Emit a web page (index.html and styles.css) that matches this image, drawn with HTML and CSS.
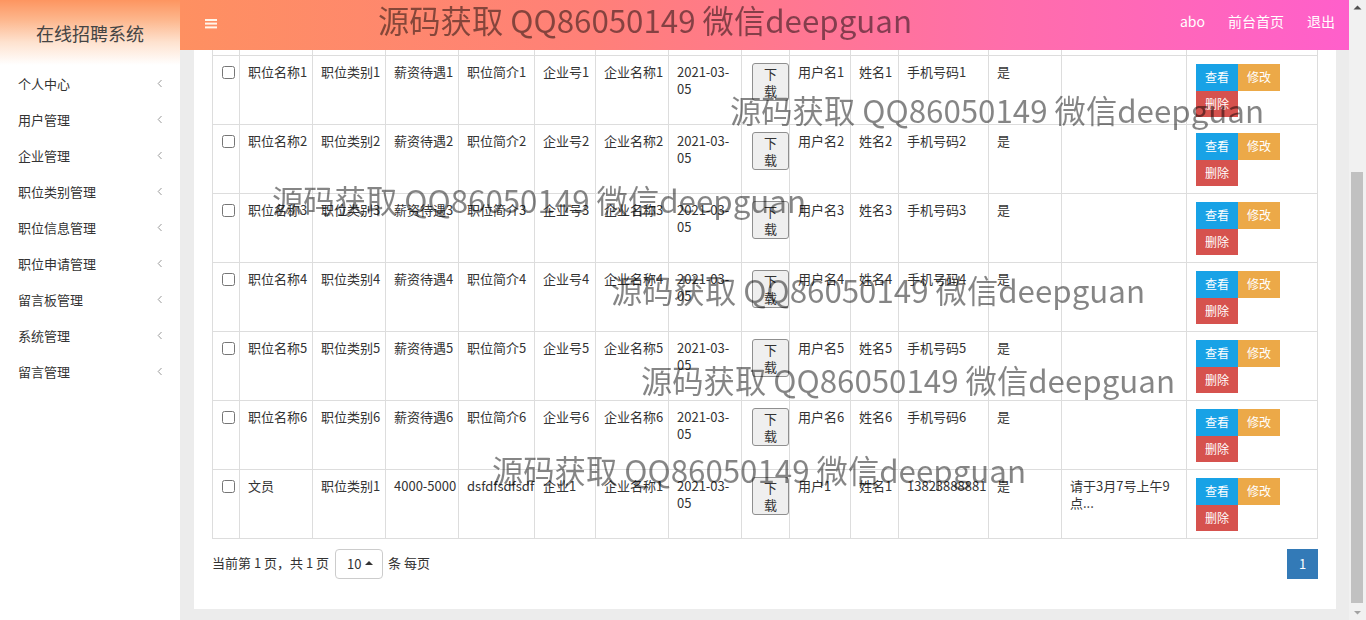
FILE: index.html
```html
<!DOCTYPE html>
<html lang="zh-CN">
<head>
<meta charset="utf-8">
<title>在线招聘系统</title>
<link rel="stylesheet" href="styles.css">
</head>
<body>
<div class="app">
<aside class="sidebar">
  <div class="logo">在线招聘系统</div>
  <ul class="menu">
    <li><span>个人中心</span><svg class="chev" width="6" height="9" viewBox="0 0 6 9"><polyline points="4.5,1 1.2,4.5 4.5,8" fill="none" stroke="#9a9a9a" stroke-width="1"/></svg></li>
    <li><span>用户管理</span><svg class="chev" width="6" height="9" viewBox="0 0 6 9"><polyline points="4.5,1 1.2,4.5 4.5,8" fill="none" stroke="#9a9a9a" stroke-width="1"/></svg></li>
    <li><span>企业管理</span><svg class="chev" width="6" height="9" viewBox="0 0 6 9"><polyline points="4.5,1 1.2,4.5 4.5,8" fill="none" stroke="#9a9a9a" stroke-width="1"/></svg></li>
    <li><span>职位类别管理</span><svg class="chev" width="6" height="9" viewBox="0 0 6 9"><polyline points="4.5,1 1.2,4.5 4.5,8" fill="none" stroke="#9a9a9a" stroke-width="1"/></svg></li>
    <li><span>职位信息管理</span><svg class="chev" width="6" height="9" viewBox="0 0 6 9"><polyline points="4.5,1 1.2,4.5 4.5,8" fill="none" stroke="#9a9a9a" stroke-width="1"/></svg></li>
    <li><span>职位申请管理</span><svg class="chev" width="6" height="9" viewBox="0 0 6 9"><polyline points="4.5,1 1.2,4.5 4.5,8" fill="none" stroke="#9a9a9a" stroke-width="1"/></svg></li>
    <li><span>留言板管理</span><svg class="chev" width="6" height="9" viewBox="0 0 6 9"><polyline points="4.5,1 1.2,4.5 4.5,8" fill="none" stroke="#9a9a9a" stroke-width="1"/></svg></li>
    <li><span>系统管理</span><svg class="chev" width="6" height="9" viewBox="0 0 6 9"><polyline points="4.5,1 1.2,4.5 4.5,8" fill="none" stroke="#9a9a9a" stroke-width="1"/></svg></li>
    <li><span>留言管理</span><svg class="chev" width="6" height="9" viewBox="0 0 6 9"><polyline points="4.5,1 1.2,4.5 4.5,8" fill="none" stroke="#9a9a9a" stroke-width="1"/></svg></li>
  </ul>
</aside>

<div class="workspace">
  <header class="topbar">
    <svg class="burger" width="12" height="10" viewBox="0 0 12 10"><rect x="0" y="0" width="12" height="2" fill="#fff6ea"/><rect x="0" y="3.6" width="12" height="2" fill="#fff6ea"/><rect x="0" y="7.4" width="12" height="2" fill="#fff6ea"/></svg>
    <nav class="topnav">
      <a>abo</a>
      <a>前台首页</a>
      <a>退出</a>
    </nav>
  </header>

  <main class="main">
    <section class="card">
      <div class="card-title">职位信息列表</div>
      <form class="search">
        <label>职位名称</label><input class="field" type="text">
        <label>职位类别</label><input class="field" type="text">
        <button type="button" class="sbtn blue">查询</button>
      </form>
      <div class="actions">
        <button type="button" class="sbtn green">新增</button>
        <button type="button" class="sbtn red">删除</button>
      </div>
      <table class="grid">
        <colgroup>
          <col style="width:27px"><col style="width:73px"><col style="width:73px"><col style="width:73px"><col style="width:76px"><col style="width:61px"><col style="width:73px"><col style="width:73px"><col style="width:48px"><col style="width:61px"><col style="width:48px"><col style="width:90px"><col style="width:73px"><col style="width:125px"><col style="width:131px">
        </colgroup>
        <thead>
          <tr><th><input type="checkbox" class="ck"></th><th>职位名称</th><th>职位类别</th><th>薪资待遇</th><th>职位简介</th><th>企业号</th><th>企业名称</th><th>发布日期</th><th>附件</th><th>用户名</th><th>姓名</th><th>手机号码</th><th>是否审核</th><th>审核回复</th><th>操作</th></tr>
        </thead>
        <tbody>
          <tr><td><input type="checkbox" class="ck"></td><td>职位名称1</td><td>职位类别1</td><td>薪资待遇1</td><td>职位简介1</td><td>企业号1</td><td>企业名称1</td><td class="w">2021-03-05</td><td><button type="button" class="dl">下载</button></td><td>用户名1</td><td>姓名1</td><td>手机号码1</td><td>是</td><td class="w"></td><td><div class="ops"><button type="button" class="op view">查看</button><button type="button" class="op edit">修改</button><button type="button" class="op del">删除</button></div></td></tr>
          <tr><td><input type="checkbox" class="ck"></td><td>职位名称2</td><td>职位类别2</td><td>薪资待遇2</td><td>职位简介2</td><td>企业号2</td><td>企业名称2</td><td class="w">2021-03-05</td><td><button type="button" class="dl">下载</button></td><td>用户名2</td><td>姓名2</td><td>手机号码2</td><td>是</td><td class="w"></td><td><div class="ops"><button type="button" class="op view">查看</button><button type="button" class="op edit">修改</button><button type="button" class="op del">删除</button></div></td></tr>
          <tr><td><input type="checkbox" class="ck"></td><td>职位名称3</td><td>职位类别3</td><td>薪资待遇3</td><td>职位简介3</td><td>企业号3</td><td>企业名称3</td><td class="w">2021-03-05</td><td><button type="button" class="dl">下载</button></td><td>用户名3</td><td>姓名3</td><td>手机号码3</td><td>是</td><td class="w"></td><td><div class="ops"><button type="button" class="op view">查看</button><button type="button" class="op edit">修改</button><button type="button" class="op del">删除</button></div></td></tr>
          <tr><td><input type="checkbox" class="ck"></td><td>职位名称4</td><td>职位类别4</td><td>薪资待遇4</td><td>职位简介4</td><td>企业号4</td><td>企业名称4</td><td class="w">2021-03-05</td><td><button type="button" class="dl">下载</button></td><td>用户名4</td><td>姓名4</td><td>手机号码4</td><td>是</td><td class="w"></td><td><div class="ops"><button type="button" class="op view">查看</button><button type="button" class="op edit">修改</button><button type="button" class="op del">删除</button></div></td></tr>
          <tr><td><input type="checkbox" class="ck"></td><td>职位名称5</td><td>职位类别5</td><td>薪资待遇5</td><td>职位简介5</td><td>企业号5</td><td>企业名称5</td><td class="w">2021-03-05</td><td><button type="button" class="dl">下载</button></td><td>用户名5</td><td>姓名5</td><td>手机号码5</td><td>是</td><td class="w"></td><td><div class="ops"><button type="button" class="op view">查看</button><button type="button" class="op edit">修改</button><button type="button" class="op del">删除</button></div></td></tr>
          <tr><td><input type="checkbox" class="ck"></td><td>职位名称6</td><td>职位类别6</td><td>薪资待遇6</td><td>职位简介6</td><td>企业号6</td><td>企业名称6</td><td class="w">2021-03-05</td><td><button type="button" class="dl">下载</button></td><td>用户名6</td><td>姓名6</td><td>手机号码6</td><td>是</td><td class="w"></td><td><div class="ops"><button type="button" class="op view">查看</button><button type="button" class="op edit">修改</button><button type="button" class="op del">删除</button></div></td></tr>
          <tr><td><input type="checkbox" class="ck"></td><td>文员</td><td>职位类别1</td><td>4000-5000</td><td>dsfdfsdfsdf</td><td>企业1</td><td>企业名称1</td><td class="w">2021-03-05</td><td><button type="button" class="dl">下载</button></td><td>用户1</td><td>姓名1</td><td>13823888881</td><td>是</td><td class="w">请于3月7号上午9点...</td><td><div class="ops"><button type="button" class="op view">查看</button><button type="button" class="op edit">修改</button><button type="button" class="op del">删除</button></div></td></tr>
        </tbody>
      </table>
      <div class="pager">
        <div class="pinfo">
          <span class="ptext">当前第 1 页，共 1 页</span>
          <button type="button" class="psize">10<span class="caret"></span></button>
          <span class="ptext">条 每页</span>
        </div>
        <div class="pages"><span class="page active">1</span></div>
      </div>
    </section>
  </main>
</div>

<div class="vscroll">
  <div class="sb-btn"><svg width="17" height="17" viewBox="0 0 17 17"><path d="M4.5 9.5 L8.5 5.5 L12.5 9.5Z" fill="#505050"/></svg></div>
  <div class="sb-track"><div class="sb-thumb"></div></div>
  <div class="sb-btn"><svg width="17" height="17" viewBox="0 0 17 17"><path d="M5 8 L8.5 11.5 L12 8Z" fill="#a3a3a3"/></svg></div>
</div>
</div>

<div class="wm wm1">源码获取 QQ86050149 微信deepguan</div>
<div class="wm wm2">源码获取 QQ86050149 微信deepguan</div>
<div class="wm wm3">源码获取 QQ86050149 微信deepguan</div>
<div class="wm wm4">源码获取 QQ86050149 微信deepguan</div>
<div class="wm wm5">源码获取 QQ86050149 微信deepguan</div>
<div class="wm wm6">源码获取 QQ86050149 微信deepguan</div>
</body>
</html>
```

FILE: styles.css
```css
* { box-sizing: border-box; }
html, body { margin: 0; padding: 0; height: 100%; overflow: hidden; }
body {
  font-family: "Noto Sans CJK SC", "Noto Sans", sans-serif;
  font-size: 13px;
  line-height: 17px;
  color: #333;
  background: #ececec;
}
.app { display: flex; height: 100vh; }

/* sidebar */
.sidebar {
  width: 180px;
  flex-shrink: 0;
  background: #fff;
}
.logo {
  height: 65px;
  display: flex;
  align-items: center;
  justify-content: center;
  font-size: 18px;
  color: #444;
  padding-top: 2px;
  background: linear-gradient(to bottom, #fd9560 0%, #fdb68c 30%, #fee2cf 65%, #ffffff 100%);
}
.menu { list-style: none; margin: 0; padding: 0; }
.menu li {
  height: 36px;
  display: flex;
  align-items: center;
  justify-content: space-between;
  padding: 0 17px 0 18px;
  font-size: 13px;
  color: #333;
}
.chev { display: block; }

/* right column */
.workspace { flex: 1; min-width: 0; display: flex; flex-direction: column; }

.topbar {
  height: 50px;
  flex-shrink: 0;
  display: flex;
  justify-content: space-between;
  align-items: flex-start;
  padding: 0 14px 0 25px;
  background: linear-gradient(to right, #fe9061 0%, #ff8078 35%, #ff6eaa 70%, #ff5fcb 100%);
}
.burger { display: block; margin-top: 19px; }
.topnav { display: flex; gap: 23px; padding-top: 11px; }
.topnav a { color: #fff; font-size: 14px; line-height: 20px; }

/* content: scrolled to its end, older content clipped above */
.main {
  flex: 1;
  min-height: 0;
  overflow: hidden;
  display: flex;
  flex-direction: column;
  justify-content: flex-end;
  padding: 0 13px 11px 14px;
}
.card { flex-shrink: 0; background: #fff; padding: 18px 18px 30px; }
.card-title { font-size: 16px; line-height: 28px; margin-bottom: 20px; color: #333; }
.search { display: flex; align-items: center; gap: 8px; margin-bottom: 20px; height: 34px; }
.field { height: 34px; width: 160px; border: 1px solid #ccc; border-radius: 4px; margin-right: 10px; }
.actions { display: flex; gap: 8px; height: 34px; margin-bottom: 20px; }
.sbtn { height: 34px; padding: 0 14px; border: 0; border-radius: 4px; color: #fff; font-family: inherit; font-size: 13px; }
.sbtn.blue { background: #337ab7; }
.sbtn.green { background: #5cb85c; }
.sbtn.red { background: #d9534f; }

/* table */
.grid {
  border-collapse: collapse;
  table-layout: fixed;
  width: 1105px;
}
.grid th, .grid td {
  border: 1px solid #ddd;
  padding: 8px 8px 7px;
  vertical-align: top;
  text-align: left;
  white-space: nowrap;
  line-height: 17px;
  font-weight: normal;
}
.grid td { padding-top: 7px; padding-bottom: 8px; }
.grid th { font-weight: bold; padding: 8px; }
.grid td.w { white-space: normal; }
.ck { margin: 3px 0 0 1px; width: 13px; height: 13px; display: block; }

.dl {
  display: block;
  width: 37px;
  height: 38px;
  margin: 0 0 0 2px;
  padding: 1px 11px;
  border: 1px solid #8f8f8f;
  border-radius: 3px;
  background: #efefef;
  color: #333;
  font-family: inherit;
  font-size: 13px;
  line-height: 17px;
  white-space: normal;
}

.ops { display: flex; flex-wrap: wrap; margin: 1px 0 -1px 1px; }
.op {
  height: 26.5px;
  padding: 0 9px;
  border: 0;
  border-radius: 0;
  color: #fff;
  font-family: inherit;
  font-size: 12px;
  line-height: 26px;
}
.op.view { background: #18a2e6; }
.op.edit { background: #eca948; }
.op.del { background: #d6524e; }

/* pager */
.pager {
  margin-top: 10px;
  height: 30px;
  display: flex;
  justify-content: space-between;
  align-items: center;
}
.pinfo { display: flex; align-items: center; font-size: 13px; color: #333; }
.ptext { padding-bottom: 3px; }
.psize {
  height: 30px;
  width: 48px;
  margin: 0 5px 0 6px;
  padding: 0 0 2px 11px;
  border: 1px solid #ccc;
  border-radius: 4px;
  background: #fff;
  color: #333;
  font-family: inherit;
  font-size: 13px;
  display: flex;
  align-items: center;
}
.caret {
  display: inline-block;
  width: 0; height: 0;
  margin-left: 3px;
  border-left: 4px solid transparent;
  border-right: 4px solid transparent;
  border-bottom: 4px solid #333;
}
.pages { display: flex; }
.page {
  width: 31px;
  height: 30px;
  display: flex;
  align-items: center;
  justify-content: center;
  padding-bottom: 2px;
  font-size: 13px;
}
.page.active { background: #337ab7; color: #fff; }

/* window scrollbar */
.vscroll {
  width: 17px;
  flex-shrink: 0;
  display: flex;
  flex-direction: column;
  background: #f1f1f1;
}
.sb-btn { height: 17px; flex-shrink: 0; }
.sb-btn svg { display: block; }
.sb-track {
  flex: 1;
  display: flex;
  flex-direction: column;
  justify-content: flex-end;
}
.sb-thumb { height: 431px; margin: 0 3px 0 2px; background: #c1c1c1; }

/* watermark overlays */
.wm {
  position: fixed;
  font-family: "Noto Sans CJK SC", "Noto Sans", sans-serif;
  font-size: 31.3px;
  line-height: 32px;
  color: rgba(0, 0, 0, 0.48);
  white-space: nowrap;
  pointer-events: none;
  z-index: 20;
}
.wm1 { left: 378px; top: 4px; }
.wm2 { left: 730px; top: 94px; }
.wm3 { left: 272px; top: 184px; }
.wm4 { left: 611px; top: 274px; }
.wm5 { left: 641px; top: 364px; }
.wm6 { left: 492px; top: 454px; }
```
